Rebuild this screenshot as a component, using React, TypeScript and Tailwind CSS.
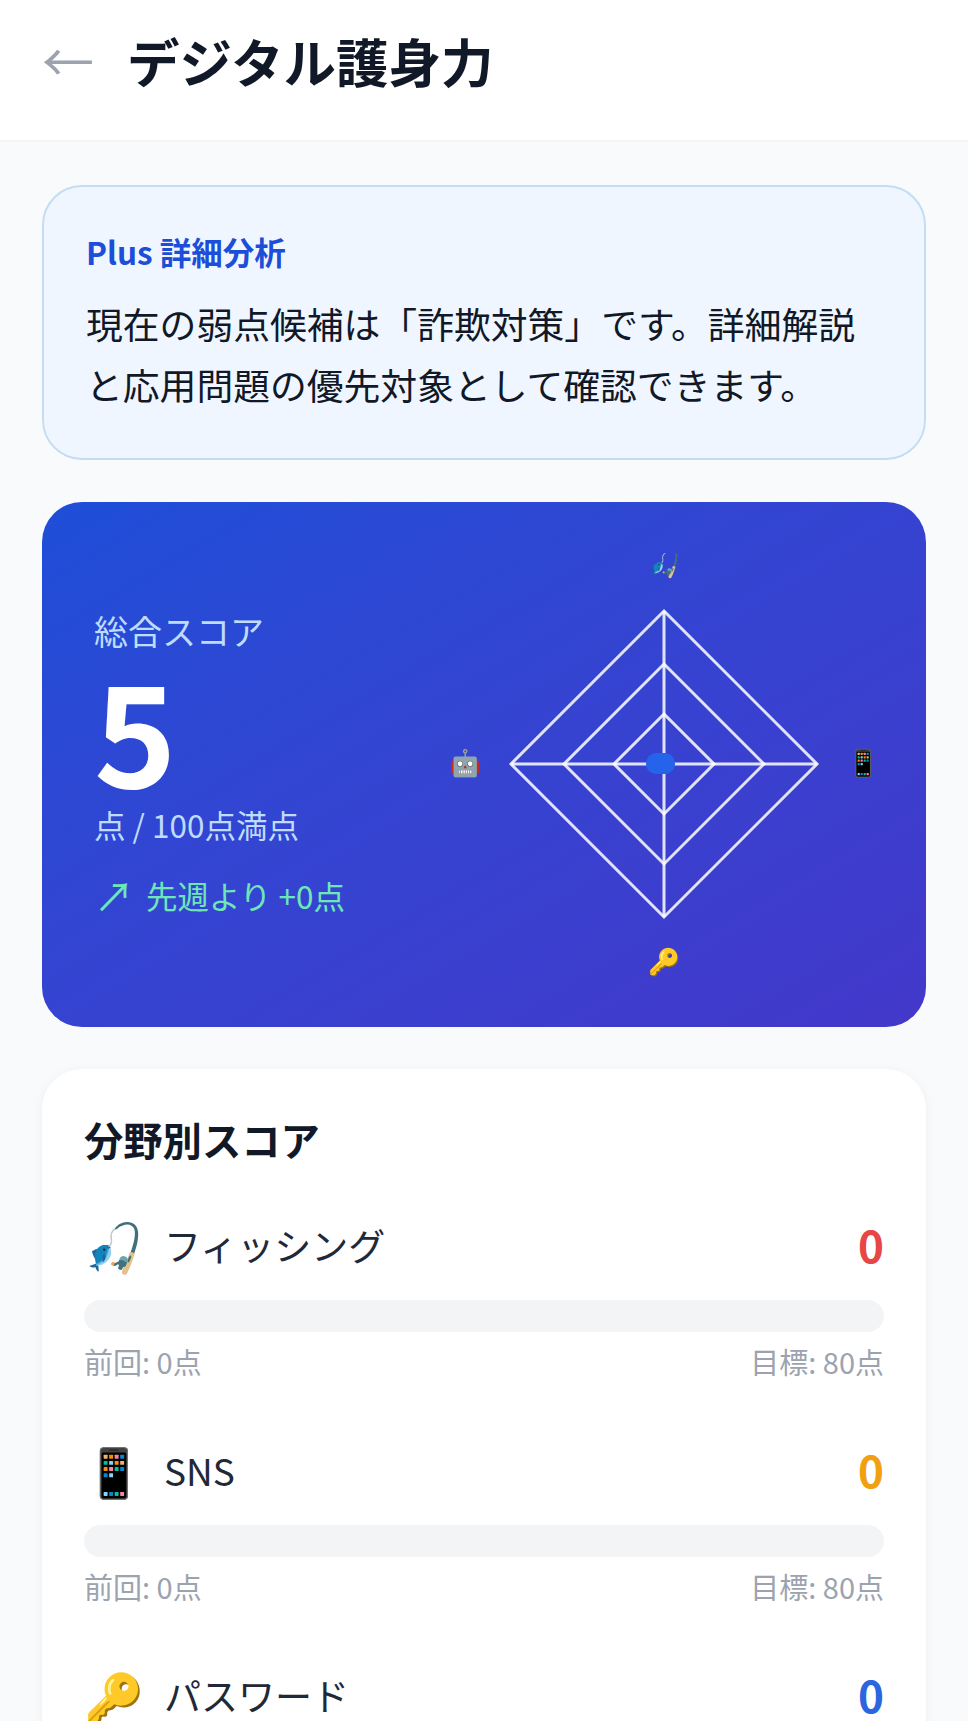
const font = { fontFamily: '"Noto Sans CJK JP", "Noto Sans", sans-serif' };

const categories = [
  { icon: "🎣", label: "フィッシング", color: "text-[#e64646]" },
  { icon: "📱", label: "SNS", color: "text-[#f0a010]" },
  { icon: "🔑", label: "パスワード", color: "text-[#2b66e0]" },
];

function Radar() {
  const c = 160;
  const rings = [153, 100, 50];
  return (
    <svg width="320" height="320" viewBox="0 0 320 320" className="-mt-0.5 overflow-visible">
      <defs>
        {/* the top label is cut off by the chart's box in the original */}
        <clipPath id="top-label">
          <rect x={c - 40} y={c - 211} width="80" height="60" />
        </clipPath>
      </defs>
      {rings.map((r) => (
        <polygon
          key={r}
          points={`${c},${c - r} ${c + r},${c} ${c},${c + r} ${c - r},${c}`}
          fill="none"
          stroke="#ffffff"
          strokeOpacity="0.85"
          strokeWidth="3"
        />
      ))}
      <line x1={c} y1={c - 153} x2={c} y2={c + 153} stroke="#ffffff" strokeOpacity="0.85" strokeWidth="3" />
      <line x1={c - 153} y1={c} x2={c + 153} y2={c} stroke="#ffffff" strokeOpacity="0.85" strokeWidth="3" />
      <rect x={c - 18} y={c - 11} width="29" height="21" rx="10" fill="#2563eb" />
      <g clipPath="url(#top-label)">
        <text x={c} y={c - 203} fontSize="26" textAnchor="middle" dominantBaseline="central">🎣</text>
      </g>
      <text x={c + 199} y={c - 4} fontSize="26" textAnchor="middle" dominantBaseline="central">📱</text>
      <text x={c} y={c + 195} fontSize="26" textAnchor="middle" dominantBaseline="central">🔑</text>
      <text x={c - 199} y={c - 4} fontSize="26" textAnchor="middle" dominantBaseline="central">🤖</text>
    </svg>
  );
}

export default function App() {
  return (
    <div style={font} className="h-[1721px] w-[968px] overflow-hidden bg-[#f9fafb]">
      <header className="flex h-[142px] items-center gap-[33px] border-b-2 border-[#f3f4f6] bg-white px-[42px] pb-5">
        <span className="text-[52px] leading-none text-[#9ca3af]">←</span>
        <h1 className="text-[52.5px] leading-none font-bold text-[#111827]">デジタル護身力</h1>
      </header>

      <main className="flex flex-col gap-[42px] px-[42px] pt-[43px]">
        <section className="rounded-[40px] border-2 border-[#c4dcf4] bg-[#eff6ff] px-[42px] pt-[42px] pb-[43px]">
          <h2 className="text-[31.5px] leading-[44px] font-bold text-[#1d4ed8]">Plus 詳細分析</h2>
          <p className="mt-5 text-[36.8px] leading-[61px] text-[#111827]">
            現在の弱点候補は「詐欺対策」です。詳細解説
            <br />
            と応用問題の優先対象として確認できます。
          </p>
        </section>

        <section className="flex h-[525px] items-center justify-between rounded-[40px] bg-gradient-to-br from-[#1d4ed8] to-[#4338ca] pr-[102px] pl-[52px] text-white">
          <div className="pb-[6px]">
            <p className="text-[34px] leading-[54px] text-[#bfdbfe]">総合スコア</p>
            <p className="text-[140px] leading-[139px] font-bold">5</p>
            <p className="mt-[5px] text-[31.5px] leading-[44px] text-[#bfdbfe]">点 / 100点満点</p>
            <p className="mt-[25px] flex items-center gap-3 text-[31.5px] leading-[48px] text-[#6ee7b7]">
              <span className="text-[40px] leading-none">↗</span>
              先週より +0点
            </p>
          </div>
          <Radar />
        </section>

        <section className="rounded-[40px] bg-white px-[42px] pt-[42px] shadow-[0_2px_12px_rgba(0,0,0,0.05)]">
          <h2 className="text-[39.3px] leading-[56px] font-bold text-[#111827]">分野別スコア</h2>
          <div className="mt-[47px] flex flex-col gap-[58px]">
            {categories.map((cat) => (
              <div key={cat.label}>
                <div className="flex h-16 items-center justify-between">
                  <div className="flex items-center gap-[22px]">
                    <span className="-mt-1 w-[58px] text-center text-[48px] leading-[64px]">{cat.icon}</span>
                    <span className="text-[37px] text-[#1f2937]">{cat.label}</span>
                  </div>
                  <span className={`-mt-1 text-[44px] font-bold ${cat.color}`}>0</span>
                </div>
                <div className="mt-[22px] h-8 rounded-full bg-[#f3f4f6]" />
                <div className="mt-[9px] flex justify-between text-[29px] leading-[40px] text-[#9ca3af]">
                  <span>前回: 0点</span>
                  <span>目標: 80点</span>
                </div>
              </div>
            ))}
          </div>
        </section>
      </main>
    </div>
  );
}
